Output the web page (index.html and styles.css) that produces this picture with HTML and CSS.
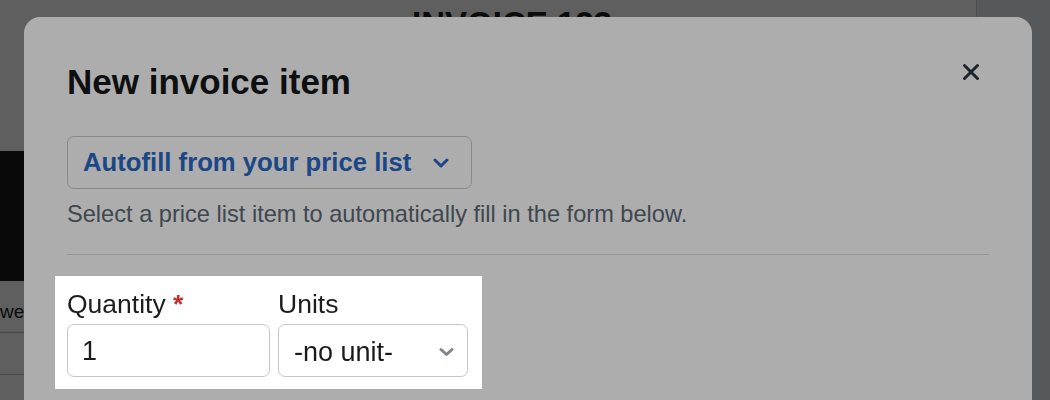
FILE: index.html
```html
<!DOCTYPE html>
<html lang="en">
<head>
  <meta charset="UTF-8" />
  <meta name="viewport" content="width=device-width, initial-scale=1.0" />
  <title>New invoice item</title>
  <link rel="stylesheet" href="styles.css">
</head>
<body>
  <div class="page">
    <main class="doc">
      <h1 class="doc-title">INVOICE 123</h1>
      <div class="doc-side">
        <div class="doc-banner"></div>
        <p class="doc-text">we</p>
        <div class="doc-row"></div>
        <div class="doc-row"></div>
      </div>
    </main>
    <aside class="sidebar"></aside>
  </div>

  <!-- New invoice item modal -->
  <div class="backdrop">
    <div class="modal">
      <div class="modal-head">
        <h2>New invoice item</h2>
        <button class="close-btn" aria-label="Close">
          <svg width="18" height="18" viewBox="0 0 18 18"><path d="M2.5 2.5l13 13M15.5 2.5l-13 13" fill="none" stroke="currentColor" stroke-width="3" stroke-linecap="round"/></svg>
        </button>
      </div>

      <button class="autofill">
        Autofill from your price list
        <svg width="16" height="10" viewBox="0 0 16 10"><path d="M2 2l6 6 6-6" fill="none" stroke="currentColor" stroke-width="3" stroke-linecap="round" stroke-linejoin="round"/></svg>
      </button>
      <p class="hint">Select a price list item to automatically fill in the form below.</p>
      <hr class="divider">

      <!-- highlighted by the tour -->
      <div class="fields spotlight">
        <div class="field qty">
          <label for="qty">Quantity <span class="req">*</span></label>
          <input id="qty" type="text" value="1">
        </div>
        <div class="field units">
          <label for="units">Units</label>
          <div class="select-wrap">
            <select id="units">
              <option>-no unit-</option>
            </select>
            <svg class="select-arrow" width="15" height="10" viewBox="0 0 15 10"><path d="M2 2.5l5.5 5 5.5-5" fill="none" stroke="currentColor" stroke-width="3" stroke-linecap="round" stroke-linejoin="round"/></svg>
          </div>
        </div>
      </div>
    </div>
  </div>
</body>
</html>
```

FILE: styles.css
```css
* {
  box-sizing: border-box;
}
html, body {
  margin: 0;
  height: 100%;
}
body {
  font-family: "Liberation Sans", Arial, sans-serif;
  background: #fff;
  color: #222;
  overflow: hidden;
}

/* page behind the modal */
.page {
  display: flex;
  height: 100vh;
}
.doc {
  flex: 1;
  padding-top: 4px;
}
.doc-title {
  margin: 0;
  padding-left: 48px;
  text-align: center;
  font-size: 33px;
  line-height: 1.2;
  font-weight: bold;
  color: #222;
}
.doc-side {
  width: 24px;
  overflow: hidden;
  margin-top: 107px;
}
.doc-banner {
  height: 130px;
  background: #1b1b1b;
}
.doc-text {
  margin: 20px 0 0;
  font-size: 19px;
  line-height: 1.2;
  color: #1e1e1e;
  white-space: nowrap;
}
.doc-row {
  height: 42px;
  border-top: 1px solid #c1c1c1;
}
.doc-text + .doc-row {
  margin-top: 9px;
}
.sidebar {
  width: 74px;
  border-left: 1px solid #c8ccd0;
  background: #e8eff6;
}

/* modal */
.backdrop {
  position: fixed;
  inset: 0;
  background: rgba(0, 0, 0, 0.45);
  padding: 17px 0 0 24px;
}
.modal {
  width: 1008px;
  height: 420px;
  background: #fff;
  border-radius: 16px;
  padding: 44px 43px 0;
}
.modal-head {
  display: flex;
  justify-content: space-between;
  align-items: flex-start;
}
.modal-head h2 {
  margin: 0;
  font-size: 35px;
  line-height: 42px;
  font-weight: bold;
  color: #161719;
}
.close-btn {
  display: flex;
  width: 18px;
  height: 18px;
  margin: 2px 9px 0 0;
  padding: 0;
  border: 0;
  background: none;
  color: #2e353b;
  cursor: pointer;
}
.autofill {
  display: flex;
  align-items: center;
  gap: 22px;
  width: fit-content;
  height: 53px;
  margin-top: 33px;
  padding: 0 22px 0 15px;
  border: 1px solid #cbcbcb;
  border-radius: 7px;
  background: #fff;
  font: bold 25.7px/1.2 "Liberation Sans", Arial, sans-serif;
  color: #2a69c6;
  cursor: pointer;
}
.hint {
  margin: 10px 0 0;
  font-size: 23.6px;
  line-height: 30px;
  color: #5d6976;
}
.divider {
  margin: 25px 0 0;
  border: 0;
  border-top: 1px solid #dcdcdc;
}

/* form row */
.fields {
  display: flex;
  gap: 8px;
  width: fit-content;
  margin: 21px 0 0 -12px;
  padding: 13px 14px 12px 12px;
  background: #fff;
}
.spotlight {
  position: relative;
  z-index: 1;
  box-shadow: 0 0 0 3000px rgba(0, 0, 0, 0.322);
}
.field {
  display: flex;
  flex-direction: column;
  gap: 4px;
}
.field label {
  font-size: 26.5px;
  line-height: 31px;
  color: #1d1d1d;
}
.req {
  color: #c62f2a;
  font-weight: bold;
}
.field input,
.field select {
  height: 53px;
  padding: 2px 14px 0;
  border: 1px solid #c4c8cc;
  border-radius: 7px;
  background: #fff;
  font: 27px "Liberation Sans", Arial, sans-serif;
  color: #1a1a1a;
  outline: none;
}
.qty input {
  width: 203px;
}
.select-wrap {
  position: relative;
  width: 190px;
}
.field select {
  width: 100%;
  padding-left: 15px;
  appearance: none;
}
.select-arrow {
  position: absolute;
  right: 14px;
  top: 23px;
  color: #7d868c;
  pointer-events: none;
}
```
